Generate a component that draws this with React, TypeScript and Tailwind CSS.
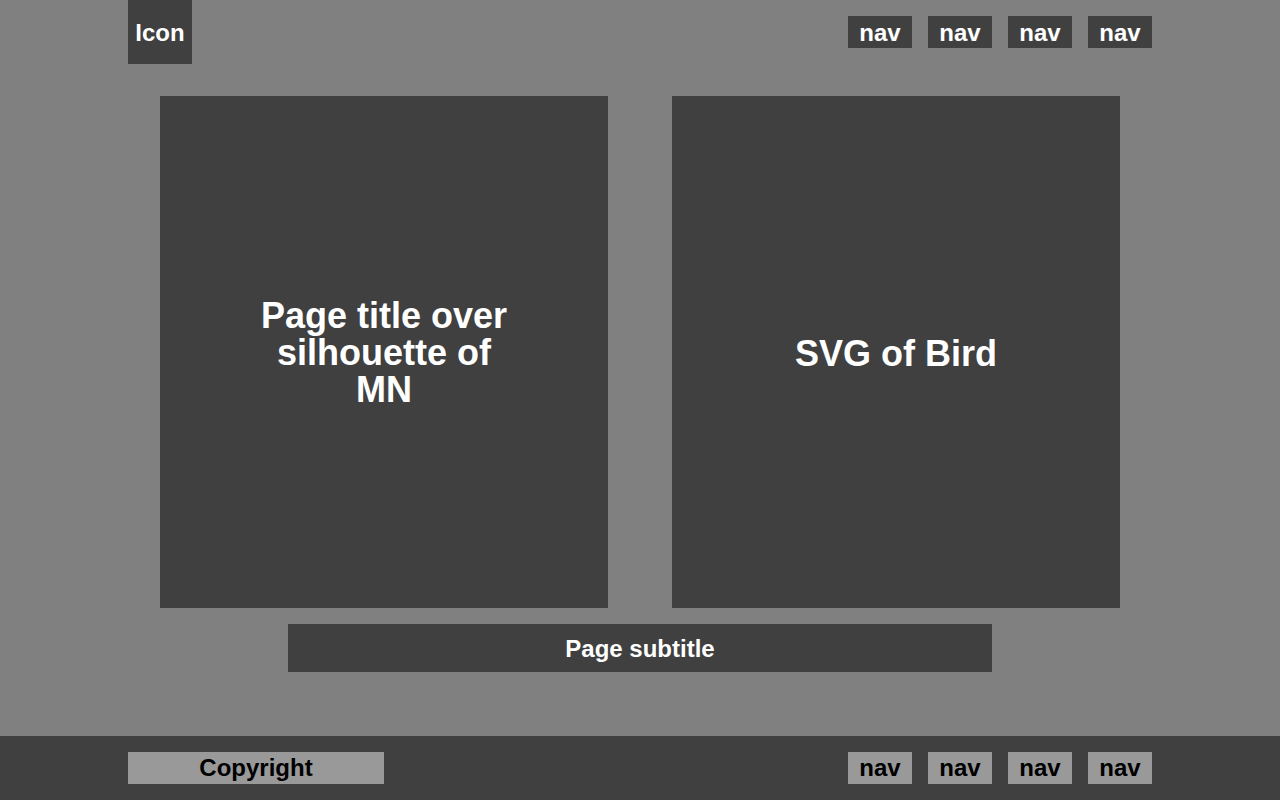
import React from 'react'

const navItems = ['nav', 'nav', 'nav', 'nav']

function NavList({ light }: { light?: boolean }) {
    return (
        <nav className="flex gap-4">
            {navItems.map((n, i) => (
                <a
                    key={i}
                    className={`w-16 h-8 flex items-center justify-center text-2xl font-bold leading-none ${light ? 'bg-[#999999] text-black' : 'pt-0.5 bg-[#404040] text-white'}`}
                >
                    {n}
                </a>
            ))}
        </nav>
    )
}

export default function App() {
    return (
        <div className="min-h-[800px] h-[800px] flex flex-col bg-[#808080]" style={{ fontFamily: '"Liberation Sans", Arial, sans-serif' }}>
            <header className="w-[1024px] mx-auto h-16 flex items-center justify-between">
                <div className="w-16 h-16 pt-0.5 bg-[#404040] text-white text-2xl font-bold flex items-center justify-center">Icon</div>
                <NavList />
            </header>
            <main className="flex-1 w-[1024px] mx-auto pt-8 flex flex-col items-center">
                <div className="flex gap-16">
                    <div className="w-[448px] h-[512px] bg-[#404040] flex items-center justify-center">
                        <h1 className="w-[256px] text-center text-white text-4xl font-bold leading-[37px]">Page title over silhouette of MN</h1>
                    </div>
                    <div className="w-[448px] h-[512px] pt-1 bg-[#404040] flex items-center justify-center">
                        <div className="text-white text-4xl font-bold">SVG of Bird</div>
                    </div>
                </div>
                <h2 className="mt-4 w-[704px] h-12 pt-0.5 bg-[#404040] text-white text-2xl font-bold flex items-center justify-center">Page subtitle</h2>
            </main>
            <footer className="h-16 bg-[#404040]">
                <div className="w-[1024px] mx-auto h-16 flex items-center justify-between">
                    <div className="w-64 h-8 bg-[#999999] text-black text-2xl font-bold flex items-center justify-center">Copyright</div>
                    <NavList light />
                </div>
            </footer>
        </div>
    )
}
